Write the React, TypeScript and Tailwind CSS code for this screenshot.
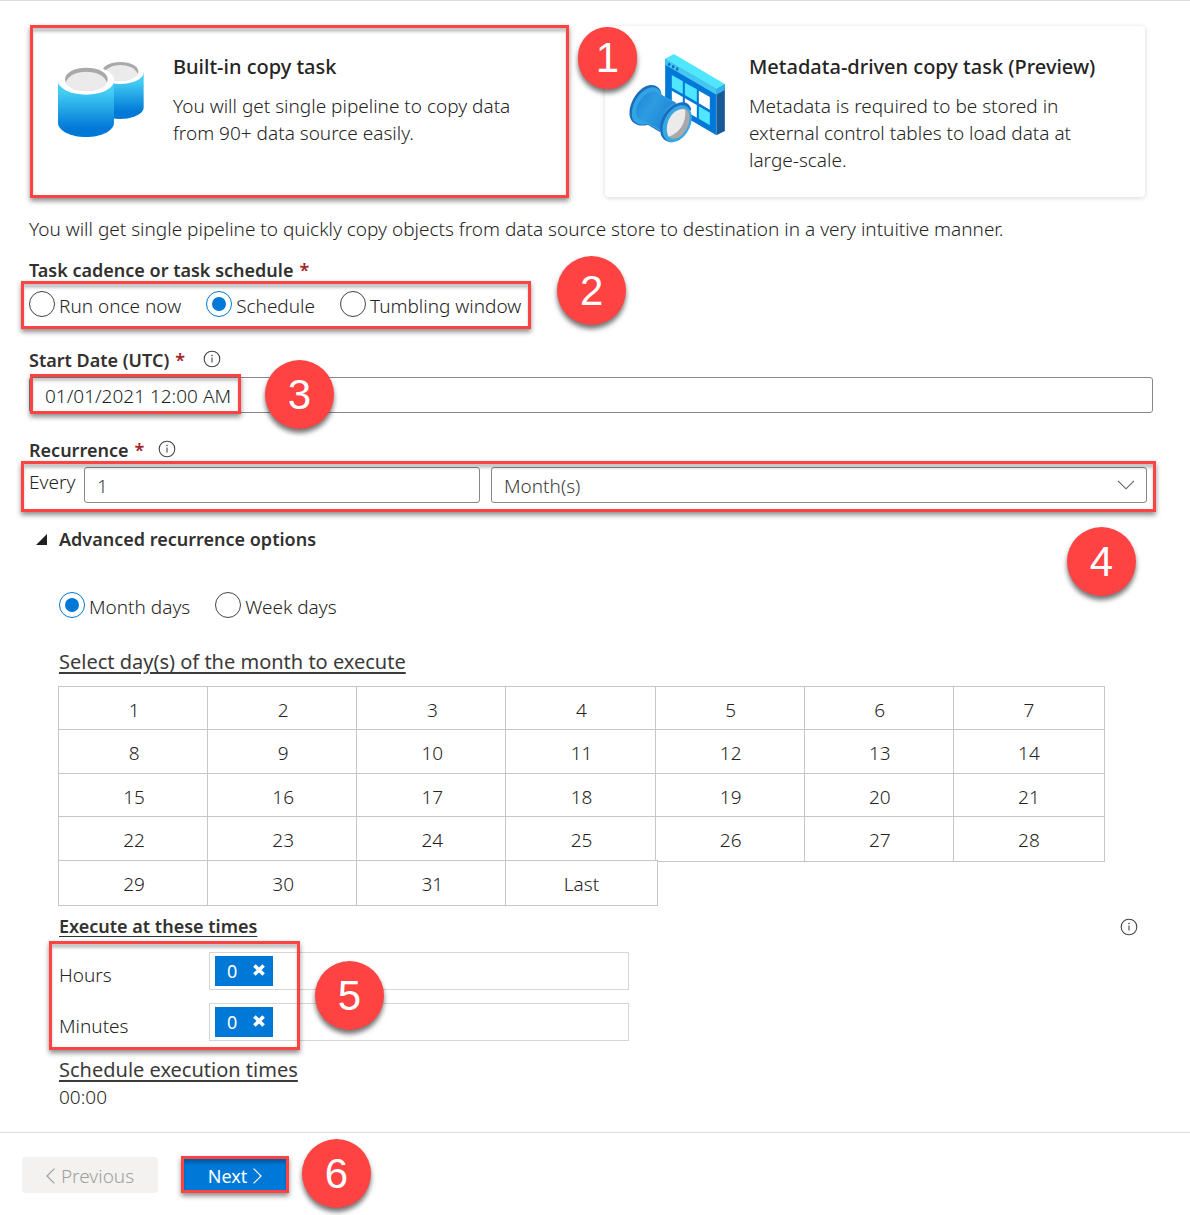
import React, { useState } from "react";

function Highlight({ className }: { className: string }) {
  return (
    <span
      aria-hidden="true"
      className={`pointer-events-none absolute z-10 border-3 border-[#ff4343] shadow-[0_3px_5px_rgba(0,0,0,0.45),inset_0_4px_3px_rgba(0,0,0,0.22)] ${className}`}
    />
  );
}

function Badge({ n, className }: { n: number; className: string }) {
  return (
    <span
      className={`pointer-events-none absolute z-20 flex items-center justify-center rounded-full bg-[#ff4343] font-['Liberation_Sans',sans-serif] text-[42px] leading-none font-normal text-white shadow-[0_4px_5px_rgba(0,0,0,0.55)] ${className}`}
    >
      {n}
    </span>
  );
}

function InfoIcon() {
  return (
    <svg width="18" height="18" viewBox="0 0 18 18" fill="none" role="img" aria-label="Info">
      <circle cx="9" cy="9" r="7.8" stroke="#444" strokeWidth="1.1" />
      <path d="M9 7.6v5" stroke="#444" strokeWidth="1.1" />
      <circle cx="9" cy="5.5" r="0.8" fill="#444" />
    </svg>
  );
}

function CylindersIcon() {
  return (
    <svg width="86" height="76" viewBox="114 138 258 228" aria-hidden="true">
      <defs>
        <linearGradient id="cyl" x1="0" y1="0" x2="0" y2="1">
          <stop offset="0.2" stopColor="#44cdf3" />
          <stop offset="0.85" stopColor="#0078d7" />
        </linearGradient>
      </defs>
      <path d="M232 172V277C232 297 263 312 301 312S371 297 371 277V172Z" fill="url(#cyl)" />
      <ellipse cx="301" cy="172" rx="70" ry="35" fill="#fff" />
      <ellipse cx="301" cy="169" rx="54" ry="28" fill="#a9a9a9" />
      <path d="M250 178C258 158 280 150 301 150S346 158 353 177C346 190 326 198 301 198S256 190 250 178Z" fill="#ebebeb" />
      <path d="M114 197V323C114 347 152 366 198 366S282 347 282 323V197Z" fill="url(#cyl)" />
      <ellipse cx="198" cy="196" rx="85" ry="43" fill="#fff" />
      <ellipse cx="199" cy="193" rx="64" ry="35" fill="#a9a9a9" />
      <path d="M137 203C144 181 170 170 199 170S254 181 261 203C254 218 230 228 199 228S144 218 137 203Z" fill="#ebebeb" />
    </svg>
  );
}

function MetadataIcon() {
  return (
    <svg width="97" height="90" viewBox="208 116 290 270" aria-hidden="true">
      <defs>
        <linearGradient id="tube" x1="0" y1="0" x2="1" y2="0.6">
          <stop offset="0" stopColor="#1c84d6" />
          <stop offset="0.45" stopColor="#2d9ce2" />
          <stop offset="1" stopColor="#1c84d6" />
        </linearGradient>
      </defs>
      <path d="M316 130L470 220V360L316 270Z" fill="#0078d7" />
      <path d="M470 220L495 206V347L470 360Z" fill="#185a97" />
      <path d="M316 130L342 116L495 206L470 221Z" fill="#50e6ff" />
      <path d="M316 130L470 221V238L316 148Z" fill="#44c8f1" />
      <path d="M470 221L495 206V224L470 238Z" fill="#32b4e4" />
      <g fill="#0f6cbd">
        <ellipse cx="328" cy="147" rx="4" ry="5" />
        <ellipse cx="340" cy="154" rx="4" ry="5" />
        <ellipse cx="352" cy="161" rx="4" ry="5" />
      </g>
      <g fill="#50e6ff">
        <path d="M336 179L369 198V236L336 217Z" />
        <path d="M375 202L411 222V260L375 239Z" />
        <path d="M417 273L450 292V330L417 310Z" />
      </g>
      <g fill="#fff">
        <path d="M417 226L450 245V283L417 264Z" />
        <path d="M336 226L369 245V283L336 264Z" />
        <path d="M375 249L411 269V307L375 286Z" />
      </g>
      <path d="M271 209C290 208 303 218 305 238L346 262L300 350L264 328C252 332 240 331 232 328C216 322 208 309 209 291C211 253 240 213 271 209Z" fill="#1d6dbd" />
      <path d="M276 216C292 215 302 225 304 239L350 262L302 348L264 326C252 329 243 329 235 326C221 320 215 309 216 294C218 257 246 220 276 216Z" fill="#32a3e3" />
      <path d="M284 228C294 230 300 238 304 241L346 264C322 268 302 305 304 344L262 320C236 316 228 304 229 290C231 262 254 230 284 228Z" fill="url(#tube)" />
      <path d="M367 261C380 259 391 268 394 282L338 381C318 380 303 370 301 346C297 306 330 264 367 261Z" fill="#1d6dbd" />
      <ellipse cx="352" cy="325" rx="39" ry="59" transform="rotate(27 352 325)" fill="#35a8e6" />
      <ellipse cx="355" cy="325" rx="30" ry="49" transform="rotate(27 355 325)" fill="#a9a9a9" />
      <path d="M376 283C380 318 362 352 326 364C316 342 322 312 340 294C352 283 366 279 376 283Z" fill="#ebebeb" />
    </svg>
  );
}

function TaskCard({ icon, title, children, elevated }: { icon: React.ReactNode; title: string; children: React.ReactNode; elevated?: boolean }) {
  return (
    <div
      className={
        elevated
          ? "flex h-full rounded-sm pt-[27px] pr-10 pb-[23px] shadow-[0_1px_5px_rgba(0,0,0,0.16)]"
          : "flex h-full pt-[27px] pr-10 pb-[23px]"
      }
    >
      <div className="flex h-[92px] w-36 shrink-0 items-center justify-center">{icon}</div>
      <div>
        <h2 className="text-[20px] leading-[27px] font-medium">{title}</h2>
        <p className="mt-[13px]">{children}</p>
      </div>
    </div>
  );
}

function Radio({ name, label, checked, onChange }: { name: string; label: string; checked: boolean; onChange: () => void }) {
  return (
    <label className="flex items-center gap-1 whitespace-nowrap">
      <input
        type="radio"
        name={name}
        checked={checked}
        onChange={onChange}
        className="flex size-[26px] shrink-0 appearance-none items-center justify-center rounded-full border border-[#444] bg-white before:size-3.5 before:rounded-full checked:border-[#0078d7] checked:before:bg-[#0078d7]"
      />
      <span className="pt-1">{label}</span>
    </label>
  );
}

function Required() {
  return <span className="ml-1.5 text-[#a4262c]">*</span>;
}

function Chip({ label }: { label: string }) {
  return (
    <span className="flex h-[30px] items-center gap-4 bg-[#0078d7] pr-2 pl-3 text-[18px] font-normal text-white">
      {label}
      <button type="button" aria-label={`Remove ${label}`} className="-mt-0.5">
        <svg width="12" height="12" viewBox="0 0 12 12" stroke="#fff" strokeWidth="3.6">
          <path d="M1.4 1.4L10.6 10.6M10.6 1.4L1.4 10.6" />
        </svg>
      </button>
    </span>
  );
}

function TimeRow({ id, label }: { id: string; label: string }) {
  return (
    <div className="flex items-center">
      <label htmlFor={id} className="w-[150px] shrink-0 pt-2">
        {label}
      </label>
      <div className="flex h-[38px] w-[420px] border border-[#d6d6d6] py-[3px] pl-[5px]">
        <Chip label="0" />
        <input id={id} className="min-w-0 flex-1 bg-transparent px-2 outline-none" />
      </div>
    </div>
  );
}

const weeks = [0, 1, 2, 3, 4].map((w) =>
  Array.from({ length: w === 4 ? 4 : 7 }, (_, d) => (w * 7 + d === 31 ? "Last" : String(w * 7 + d + 1))),
);

export default function App() {
  const [cadence, setCadence] = useState("Schedule");
  const [mode, setMode] = useState("Month days");

  return (
    <div className="overflow-x-hidden border-t border-[#dcdcdc] bg-white font-['Noto_Sans',sans-serif] text-[19px] leading-[27px] font-light text-[#252423]">
      <main className="pt-[25px] pr-[37px] pl-[29px]">
        <div className="mr-2 grid grid-cols-2 gap-9">
          <div className="relative">
            <TaskCard icon={<CylindersIcon />} title="Built-in copy task">
              You will get single pipeline to copy data from 90+ data source easily.
            </TaskCard>
            <Highlight className="-top-px right-0 -bottom-px left-px" />
            <Badge n={1} className="top-px -right-[68px] h-[62px] w-[59px]" />
          </div>
          <TaskCard icon={<MetadataIcon />} title="Metadata-driven copy task (Preview)" elevated>
            Metadata is required to be stored in external control tables to load data at large-scale.
          </TaskCard>
        </div>

        <p className="mt-[19px]">
          You will get single pipeline to quickly copy objects from data source store to destination in a very intuitive manner.
        </p>

        <fieldset className="mt-3.5">
          <legend className="text-[18px] font-semibold text-[#323130]">
            Task cadence or task schedule
            <Required />
          </legend>
          <div className="relative mt-[7px] flex h-[26px] w-fit items-center gap-[25px]">
            {["Run once now", "Schedule", "Tumbling window"].map((o) => (
              <Radio key={o} name="cadence" label={o} checked={cadence === o} onChange={() => setCadence(o)} />
            ))}
            <Highlight className="-top-2.5 -right-2.5 -bottom-3 -left-2" />
            <Badge n={2} className="-top-[35px] -right-[105px] size-[69px]" />
          </div>
        </fieldset>

        <div className="mt-[30px] flex items-center">
          <label htmlFor="start" className="text-[18px] font-semibold text-[#323130]">
            Start Date (UTC)
            <Required />
          </label>
          <span className="-mt-1 ml-[18px]">
            <InfoIcon />
          </span>
        </div>
        <div className="relative mt-[3px]">
          <input
            id="start"
            defaultValue="01/01/2021 12:00 AM"
            className="block h-9 w-full rounded-[3px] border border-[#8a8886] px-[15px] pt-0.5 text-[#201f1e]"
          />
          <Highlight className="-top-[3px] -bottom-px left-px w-[211px]" />
          <Badge n={3} className="-top-[17px] left-[236px] size-[69px]" />
        </div>

        <div className="mt-6 flex items-center">
          <span id="recurrence" className="text-[18px] font-semibold text-[#323130]">
            Recurrence
            <Required />
          </span>
          <span className="-mt-1 ml-3.5">
            <InfoIcon />
          </span>
        </div>
        <div className="relative mt-[3px] mr-1.5 flex" role="group" aria-labelledby="recurrence">
          <label htmlFor="every" className="w-[55px] shrink-0 pt-0.5">
            Every
          </label>
          <div className="min-w-0 flex-[396]">
            <input
              id="every"
              defaultValue="1"
              className="h-9 w-full rounded-[3px] border border-[#8a8886] px-3 pt-0.5 text-[#3b3a39]"
            />
          </div>
          <div className="relative ml-[11px] flex-[656]">
            <select
              aria-label="Recurrence unit"
              className="h-9 w-full appearance-none rounded-[3px] border border-[#8a8886] bg-white px-3 pt-0.5 text-[#3b3a39]"
            >
              <option>Month(s)</option>
            </select>
            <svg className="pointer-events-none absolute top-[13px] right-3" width="18" height="10" viewBox="0 0 18 10" fill="none" stroke="#605e5c" strokeWidth="1.1">
              <path d="M1 0.8L9 8.8L17 0.8" />
            </svg>
          </div>
          <Highlight className="-top-1.5 -right-[9px] -bottom-[9px] -left-2" />
          <Badge n={4} className="top-15 right-[11px] size-[69px]" />
        </div>

        <button type="button" aria-expanded="true" className="mt-[23px] flex items-center text-[18px] font-semibold text-[#323130]">
          <svg className="mr-3 ml-[7px]" width="11" height="11" viewBox="0 0 11 11" fill="#201f1e" aria-hidden="true">
            <path d="M11 0V11H0Z" />
          </svg>
          Advanced recurrence options
        </button>

        <section className="ml-[30px]">
          <div className="mt-[39px] flex h-[26px] gap-[25px]">
            {["Month days", "Week days"].map((o) => (
              <Radio key={o} name="mode" label={o} checked={mode === o} onChange={() => setMode(o)} />
            ))}
          </div>

          <h3 className="mt-[30px] text-[20px] font-normal text-[#3b3a39] underline decoration-2 underline-offset-3">
            Select day(s) of the month to execute
          </h3>
          <div className="mt-[11px] mr-[51px] -ml-px">
            <table className="w-full table-fixed border-separate border-spacing-0">
              <tbody>
                {weeks.map((week, i) => (
                  <tr key={i} className="odd:h-[43px] even:h-11">
                    {week.map((day) => (
                      <td key={day} className="p-0 align-top">
                        <div className="h-[43px]">
                          <button type="button" className="block h-[46px] w-[calc(100%+3px)] border border-[#c8c6c4] bg-white pt-0.5">
                            {day}
                          </button>
                        </div>
                      </td>
                    ))}
                  </tr>
                ))}
              </tbody>
            </table>
          </div>

          <div className="mt-2.5 mr-[15px] flex items-center justify-between">
            <h3 className="text-[18px] font-semibold text-[#323130] underline underline-offset-3">Execute at these times</h3>
            <InfoIcon />
          </div>
          <div className="relative mt-3 flex flex-col gap-[13px]">
            <TimeRow id="hours" label="Hours" />
            <TimeRow id="minutes" label="Minutes" />
            <Highlight className="-top-[11px] -bottom-[9px] -left-2.5 w-[251px]" />
            <Badge n={5} className="top-[9px] left-[256px] size-[69px]" />
          </div>
          <h3 className="mt-[15px] text-[20px] font-normal text-[#3b3a39] underline decoration-2 underline-offset-3">
            Schedule execution times
          </h3>
          <p className="mt-px">00:00</p>
        </section>
      </main>

      <footer className="mt-[21px] flex gap-[23px] border-t border-[#dcdcdc] pt-6 pb-[22px] pl-[22px]">
        <button type="button" disabled className="flex h-9 w-[136px] items-center justify-center gap-1.5 rounded-[3px] bg-[#f3f2f1] pt-0.5 text-[#a19f9d]">
          <svg width="9" height="16" viewBox="0 0 9 16" fill="none" stroke="currentColor" strokeWidth="1.2" aria-hidden="true">
            <path d="M8.4 0.6L1 8L8.4 15.4" />
          </svg>
          Previous
        </button>
        <div className="relative">
          <button type="button" className="flex h-9 w-[108px] items-center justify-center gap-1.5 bg-[#0078d7] pt-0.5 text-[18px] font-normal text-white">
            Next
            <svg width="9" height="16" viewBox="0 0 9 16" fill="none" stroke="currentColor" strokeWidth="1.2" aria-hidden="true">
              <path d="M0.6 0.6L8 8L0.6 15.4" />
            </svg>
          </button>
          <Highlight className="-top-px right-0 bottom-0 left-0" />
          <Badge n={6} className="-top-[18px] left-[121px] size-[69px]" />
        </div>
      </footer>
    </div>
  );
}
